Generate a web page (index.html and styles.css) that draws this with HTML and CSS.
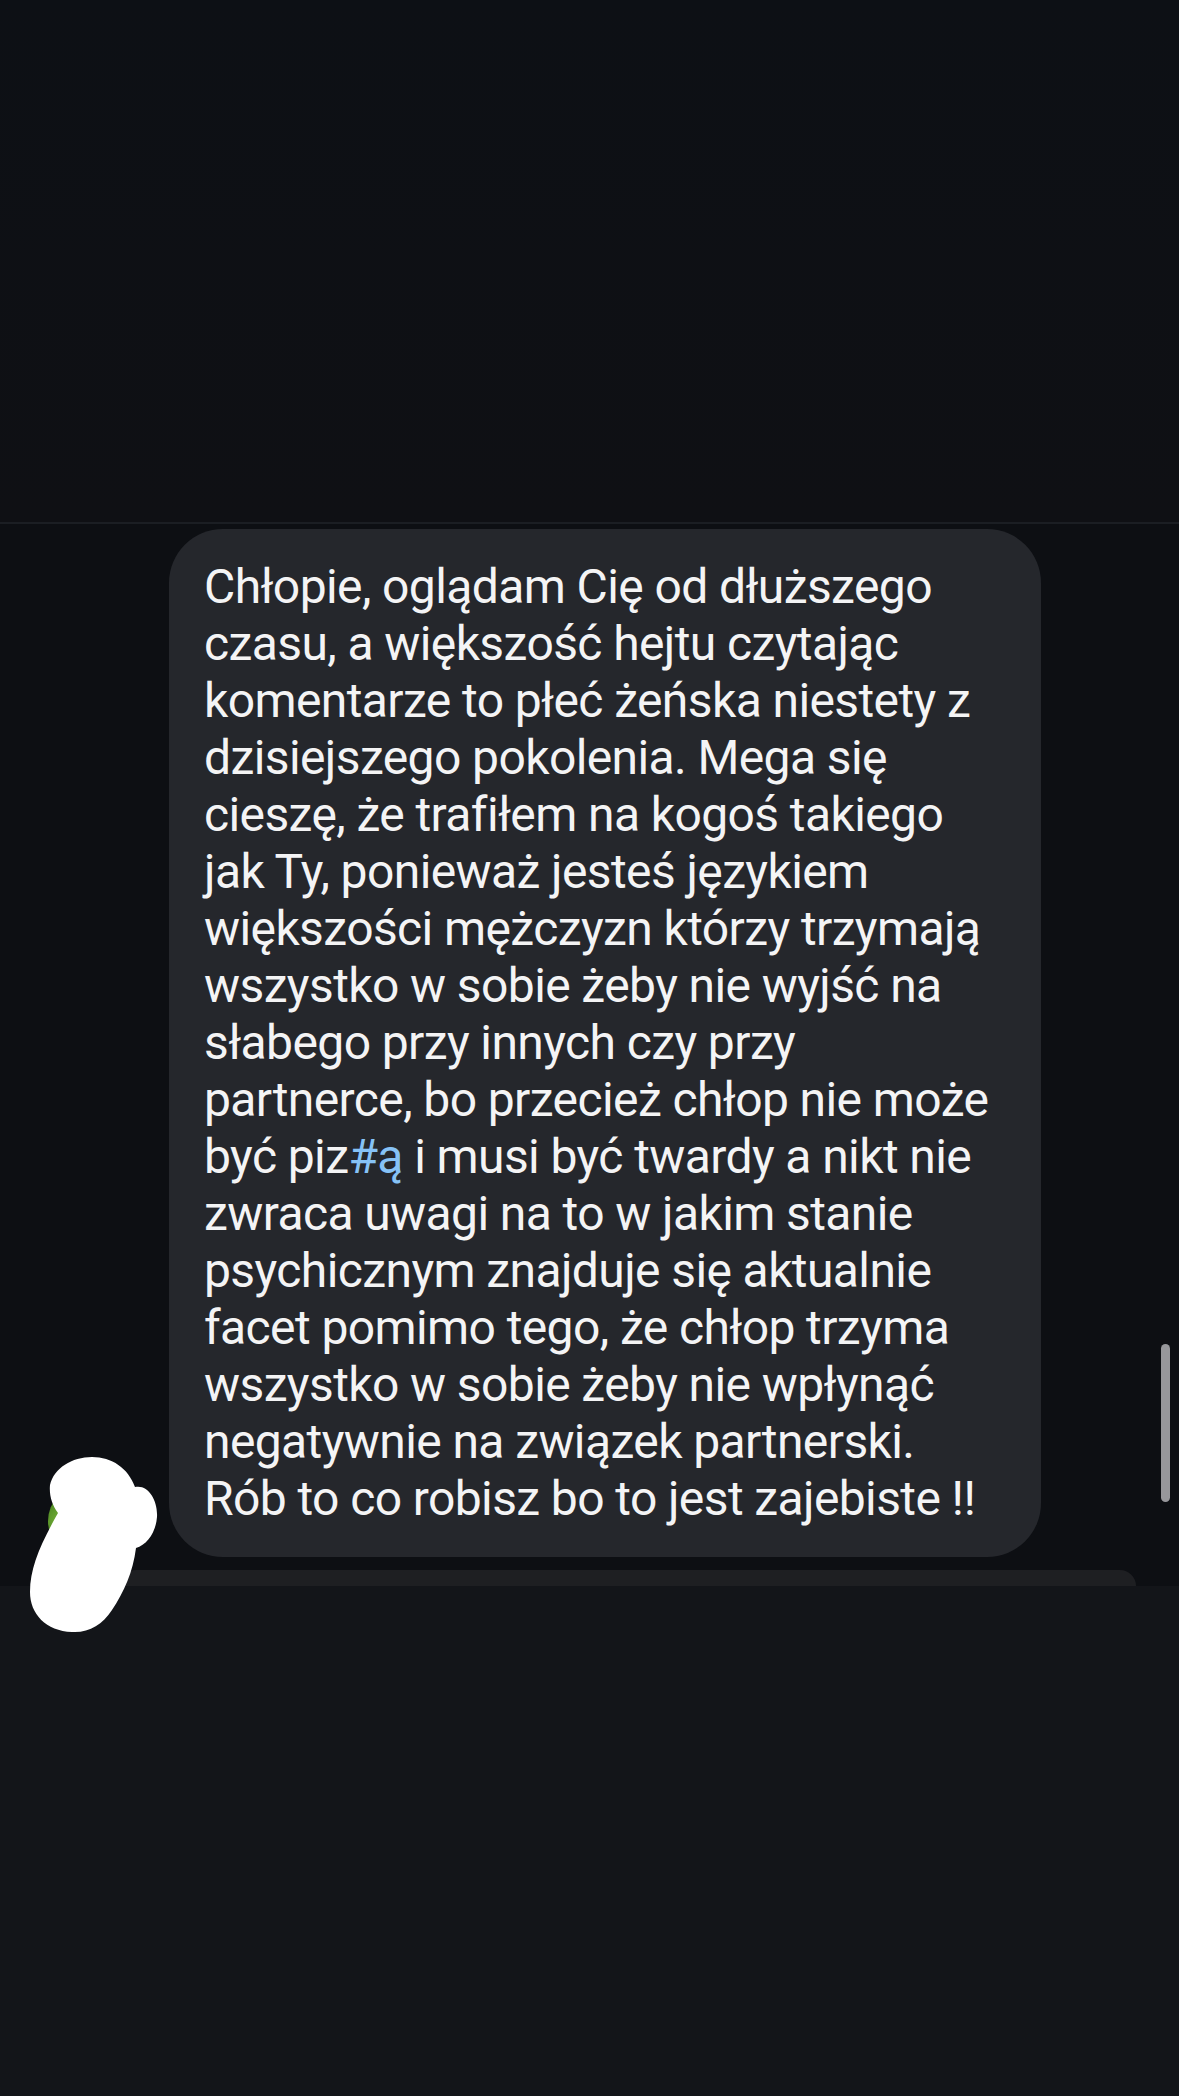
FILE: index.html
```html
<!DOCTYPE html>
<html lang="pl">
<head>
<meta charset="utf-8">
<title>Wiadomość</title>
<link rel="stylesheet" href="styles.css">
</head>
<body>
<div class="screen">
  <header class="top"></header>
  <div class="divider"></div>
  <main class="thread">
    <div class="row">
      <div class="avatar"></div>
      <div class="bubble">
        <p class="msg">Chłopie, oglądam Cię od dłuższego<br>czasu, a większość hejtu czytając<br>komentarze to płeć żeńska niestety z<br>dzisiejszego pokolenia. Mega się<br>cieszę, że trafiłem na kogoś takiego<br>jak Ty, ponieważ jesteś językiem<br>większości mężczyzn którzy trzymają<br>wszystko w sobie żeby nie wyjść na<br>słabego przy innych czy przy<br>partnerce, bo przecież chłop nie może<br>być piz<span class="tag">#ą</span> i musi być twardy a nikt nie<br>zwraca uwagi na to w jakim stanie<br>psychicznym znajduje się aktualnie<br>facet pomimo tego, że chłop trzyma<br>wszystko w sobie żeby nie wpłynąć<br>negatywnie na związek partnerski.<br>Rób to co robisz bo to jest zajebiste !!</p>
      </div>
    </div>
    <div class="next-bubble"></div>
  </main>
  <footer class="composer"></footer>
  <div class="scrollbar"></div>
  <svg class="scribble" width="180" height="200" viewBox="0 1440 180 200" aria-hidden="true">
    <path fill="#ffffff" d="M92 1457 C112 1457 128 1468 135 1487 C148 1484 158 1500 157 1517 C156 1532 147 1545 136 1548 C133 1572 124 1592 112 1610 C102 1625 89 1633 72 1632 C46 1631 30 1614 30 1592 C30 1568 40 1545 58 1513 C52 1505 49 1495 50 1485 C54 1468 72 1457 92 1457 Z"/>
  </svg>
</div>
</body>
</html>
```
FILE: styles.css
```css
* { box-sizing: border-box; }
html, body {
  margin: 0;
  padding: 0;
  background: #0d1015;
}
.screen {
  position: relative;
  width: 1179px;
  height: 2096px;
  overflow: hidden;
  display: flex;
  flex-direction: column;
  font-family: Roboto, Inter, "Noto Sans", "Liberation Sans", sans-serif;
}
.top {
  height: 522px;
  background: linear-gradient(#0d1015, #0f1014);
}
.divider {
  height: 2px;
  background: #1b1e23;
}
.thread {
  background: #0d0f13;
  padding-top: 5px;
}
.row {
  display: flex;
  align-items: flex-end;
}
.avatar {
  width: 72px;
  height: 72px;
  margin-left: 48px;
  margin-right: 49px;
  border-radius: 50%;
  background: radial-gradient(circle at 20% 50%, #7ab53a 0%, #3f7a1c 40%, #1f3a12 75%);
}
.bubble {
  width: 872px;
  background: #25272c;
  border-radius: 54px;
  padding: 29px 35px 30px;
}
.msg {
  margin: 0;
  color: #f4f4f5;
  font-size: 48px;
  line-height: 57px;
  letter-spacing: -0.6px;
  white-space: nowrap;
}
.tag { color: #86c2f6; }
.next-bubble {
  margin-top: 13px;
  margin-left: 120px;
  width: 1016px;
  height: 16px;
  background: #1e1f22;
  border-radius: 40px 40px 0 0;
}
.composer {
  flex: 1;
  background: #131519;
}
.scrollbar {
  position: absolute;
  top: 1344px;
  right: 9px;
  width: 9px;
  height: 158px;
  border-radius: 5px;
  background: #97979b;
}
.scribble {
  position: absolute;
  left: 0;
  top: 1440px;
}
```
